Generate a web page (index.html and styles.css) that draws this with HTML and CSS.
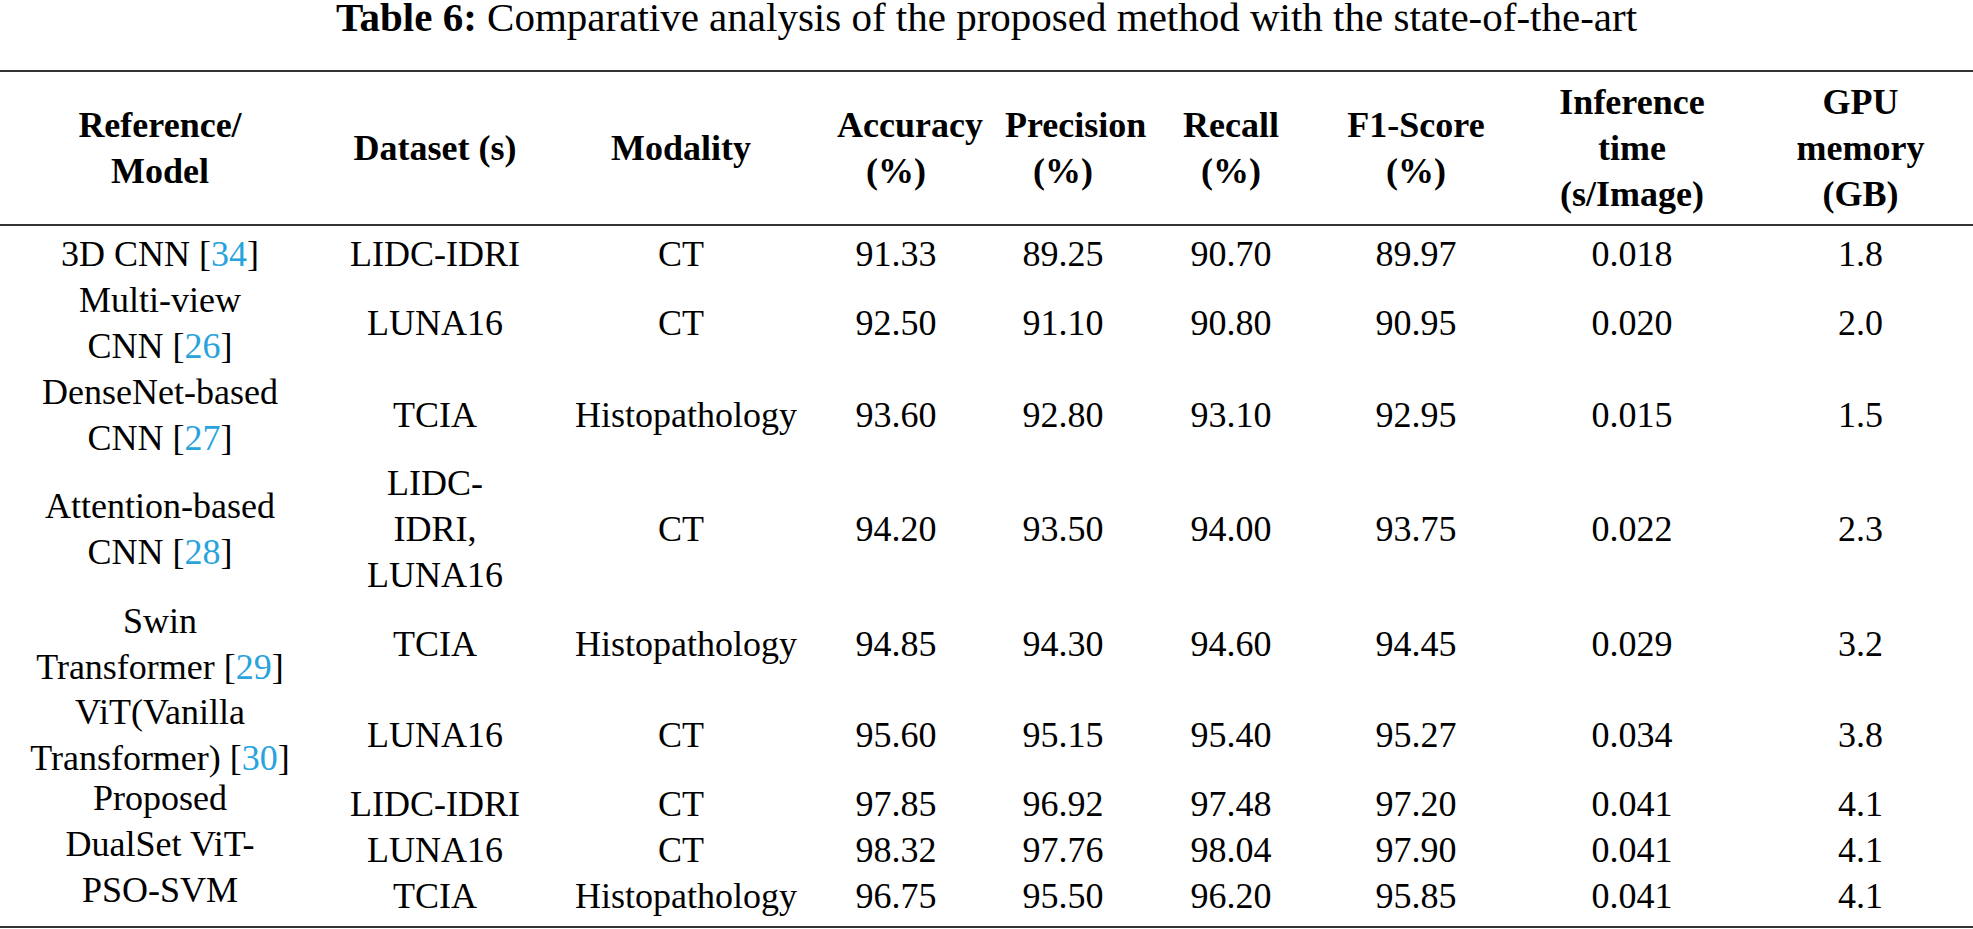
FILE: index.html
```html
<!DOCTYPE html>
<html lang="en">
<head>
<meta charset="utf-8">
<title>Table 6</title>
<link rel="stylesheet" href="styles.css">
</head>
<body>
<div class="caption"><span class="label">Table 6:</span> Comparative analysis of the proposed method with the state-of-the-art</div>
<table class="data">
  <colgroup>
    <col class="c-model">
    <col class="c-dataset">
    <col class="c-modality">
    <col class="c-acc">
    <col class="c-prec">
    <col class="c-rec">
    <col class="c-f1">
    <col class="c-inf">
    <col class="c-gpu">
  </colgroup>
  <thead>
    <tr>
      <th>Reference/<br>Model</th>
      <th>Dataset (s)</th>
      <th>Modality</th>
      <th>Accuracy<br>(%)</th>
      <th>Precision<br>(%)</th>
      <th>Recall<br>(%)</th>
      <th>F1-Score<br>(%)</th>
      <th>Inference<br>time<br>(s/Image)</th>
      <th>GPU<br>memory<br>(GB)</th>
    </tr>
  </thead>
  <tbody>
    <tr class="first">
      <td>3D CNN [<a class="cite">34</a>]</td>
      <td>LIDC-IDRI</td>
      <td>CT</td>
      <td>91.33</td>
      <td>89.25</td>
      <td>90.70</td>
      <td>89.97</td>
      <td>0.018</td>
      <td>1.8</td>
    </tr>
    <tr>
      <td>Multi-view<br>CNN [<a class="cite">26</a>]</td>
      <td>LUNA16</td>
      <td>CT</td>
      <td>92.50</td>
      <td>91.10</td>
      <td>90.80</td>
      <td>90.95</td>
      <td>0.020</td>
      <td>2.0</td>
    </tr>
    <tr>
      <td>DenseNet-based<br>CNN [<a class="cite">27</a>]</td>
      <td>TCIA</td>
      <td>Histopathology</td>
      <td>93.60</td>
      <td>92.80</td>
      <td>93.10</td>
      <td>92.95</td>
      <td>0.015</td>
      <td>1.5</td>
    </tr>
    <tr>
      <td>Attention-based<br>CNN [<a class="cite">28</a>]</td>
      <td>LIDC-<br>IDRI,<br>LUNA16</td>
      <td>CT</td>
      <td>94.20</td>
      <td>93.50</td>
      <td>94.00</td>
      <td>93.75</td>
      <td>0.022</td>
      <td>2.3</td>
    </tr>
    <tr>
      <td>Swin<br>Transformer [<a class="cite">29</a>]</td>
      <td>TCIA</td>
      <td>Histopathology</td>
      <td>94.85</td>
      <td>94.30</td>
      <td>94.60</td>
      <td>94.45</td>
      <td>0.029</td>
      <td>3.2</td>
    </tr>
    <tr>
      <td>ViT(Vanilla<br>Transformer) [<a class="cite">30</a>]</td>
      <td>LUNA16</td>
      <td>CT</td>
      <td>95.60</td>
      <td>95.15</td>
      <td>95.40</td>
      <td>95.27</td>
      <td>0.034</td>
      <td>3.8</td>
    </tr>
    <tr>
      <td class="group" rowspan="3"><div class="group-text">Proposed<br>DualSet ViT-<br>PSO-SVM</div></td>
      <td>LIDC-IDRI</td>
      <td>CT</td>
      <td>97.85</td>
      <td>96.92</td>
      <td>97.48</td>
      <td>97.20</td>
      <td>0.041</td>
      <td>4.1</td>
    </tr>
    <tr>
      <td>LUNA16</td>
      <td>CT</td>
      <td>98.32</td>
      <td>97.76</td>
      <td>98.04</td>
      <td>97.90</td>
      <td>0.041</td>
      <td>4.1</td>
    </tr>
    <tr class="last">
      <td>TCIA</td>
      <td>Histopathology</td>
      <td>96.75</td>
      <td>95.50</td>
      <td>96.20</td>
      <td>95.85</td>
      <td>0.041</td>
      <td>4.1</td>
    </tr>
  </tbody>
</table>
</body>
</html>
```

FILE: styles.css
```css
html, body {
  margin: 0;
  padding: 0;
  background: #ffffff;
}

body {
  font-family: "Liberation Serif", "Times New Roman", serif;
  color: #000000;
}

.caption {
  text-align: center;
  font-size: 41px;
  line-height: 34px;
  height: 34px;
  margin: 0 0 36px;
  white-space: nowrap;
}

.caption .label {
  font-weight: bold;
}

.data {
  width: 100%;
  table-layout: fixed;
  border-collapse: separate;
  border-spacing: 0;
  font-size: 36px;
  line-height: 45.8px;
}

.c-model { width: 320px; }
.c-dataset { width: 230px; }
.c-modality { width: 262px; }
.c-acc { width: 168px; }
.c-prec { width: 166px; }
.c-rec { width: 170px; }
.c-f1 { width: 200px; }
.c-inf { width: 232px; }
.c-gpu { width: 225px; }

.data th,
.data td {
  padding: 0 25px;
  text-align: center;
  vertical-align: middle;
  white-space: nowrap;
}

.data thead th {
  font-weight: bold;
  border-top: 2px solid #333333;
  border-bottom: 2px solid #333333;
  padding-top: 8px;
  padding-bottom: 7px;
}

.data tbody tr.first td {
  padding-top: 6px;
}

.data tbody tr.last td,
.data tbody td.group {
  padding-bottom: 7px;
  border-bottom: 2px solid #333333;
}

.data tbody td.group {
  vertical-align: top;
}

.group-text {
  margin-top: -6px;
}

.cite {
  color: #29a3dc;
  text-decoration: none;
}
```
